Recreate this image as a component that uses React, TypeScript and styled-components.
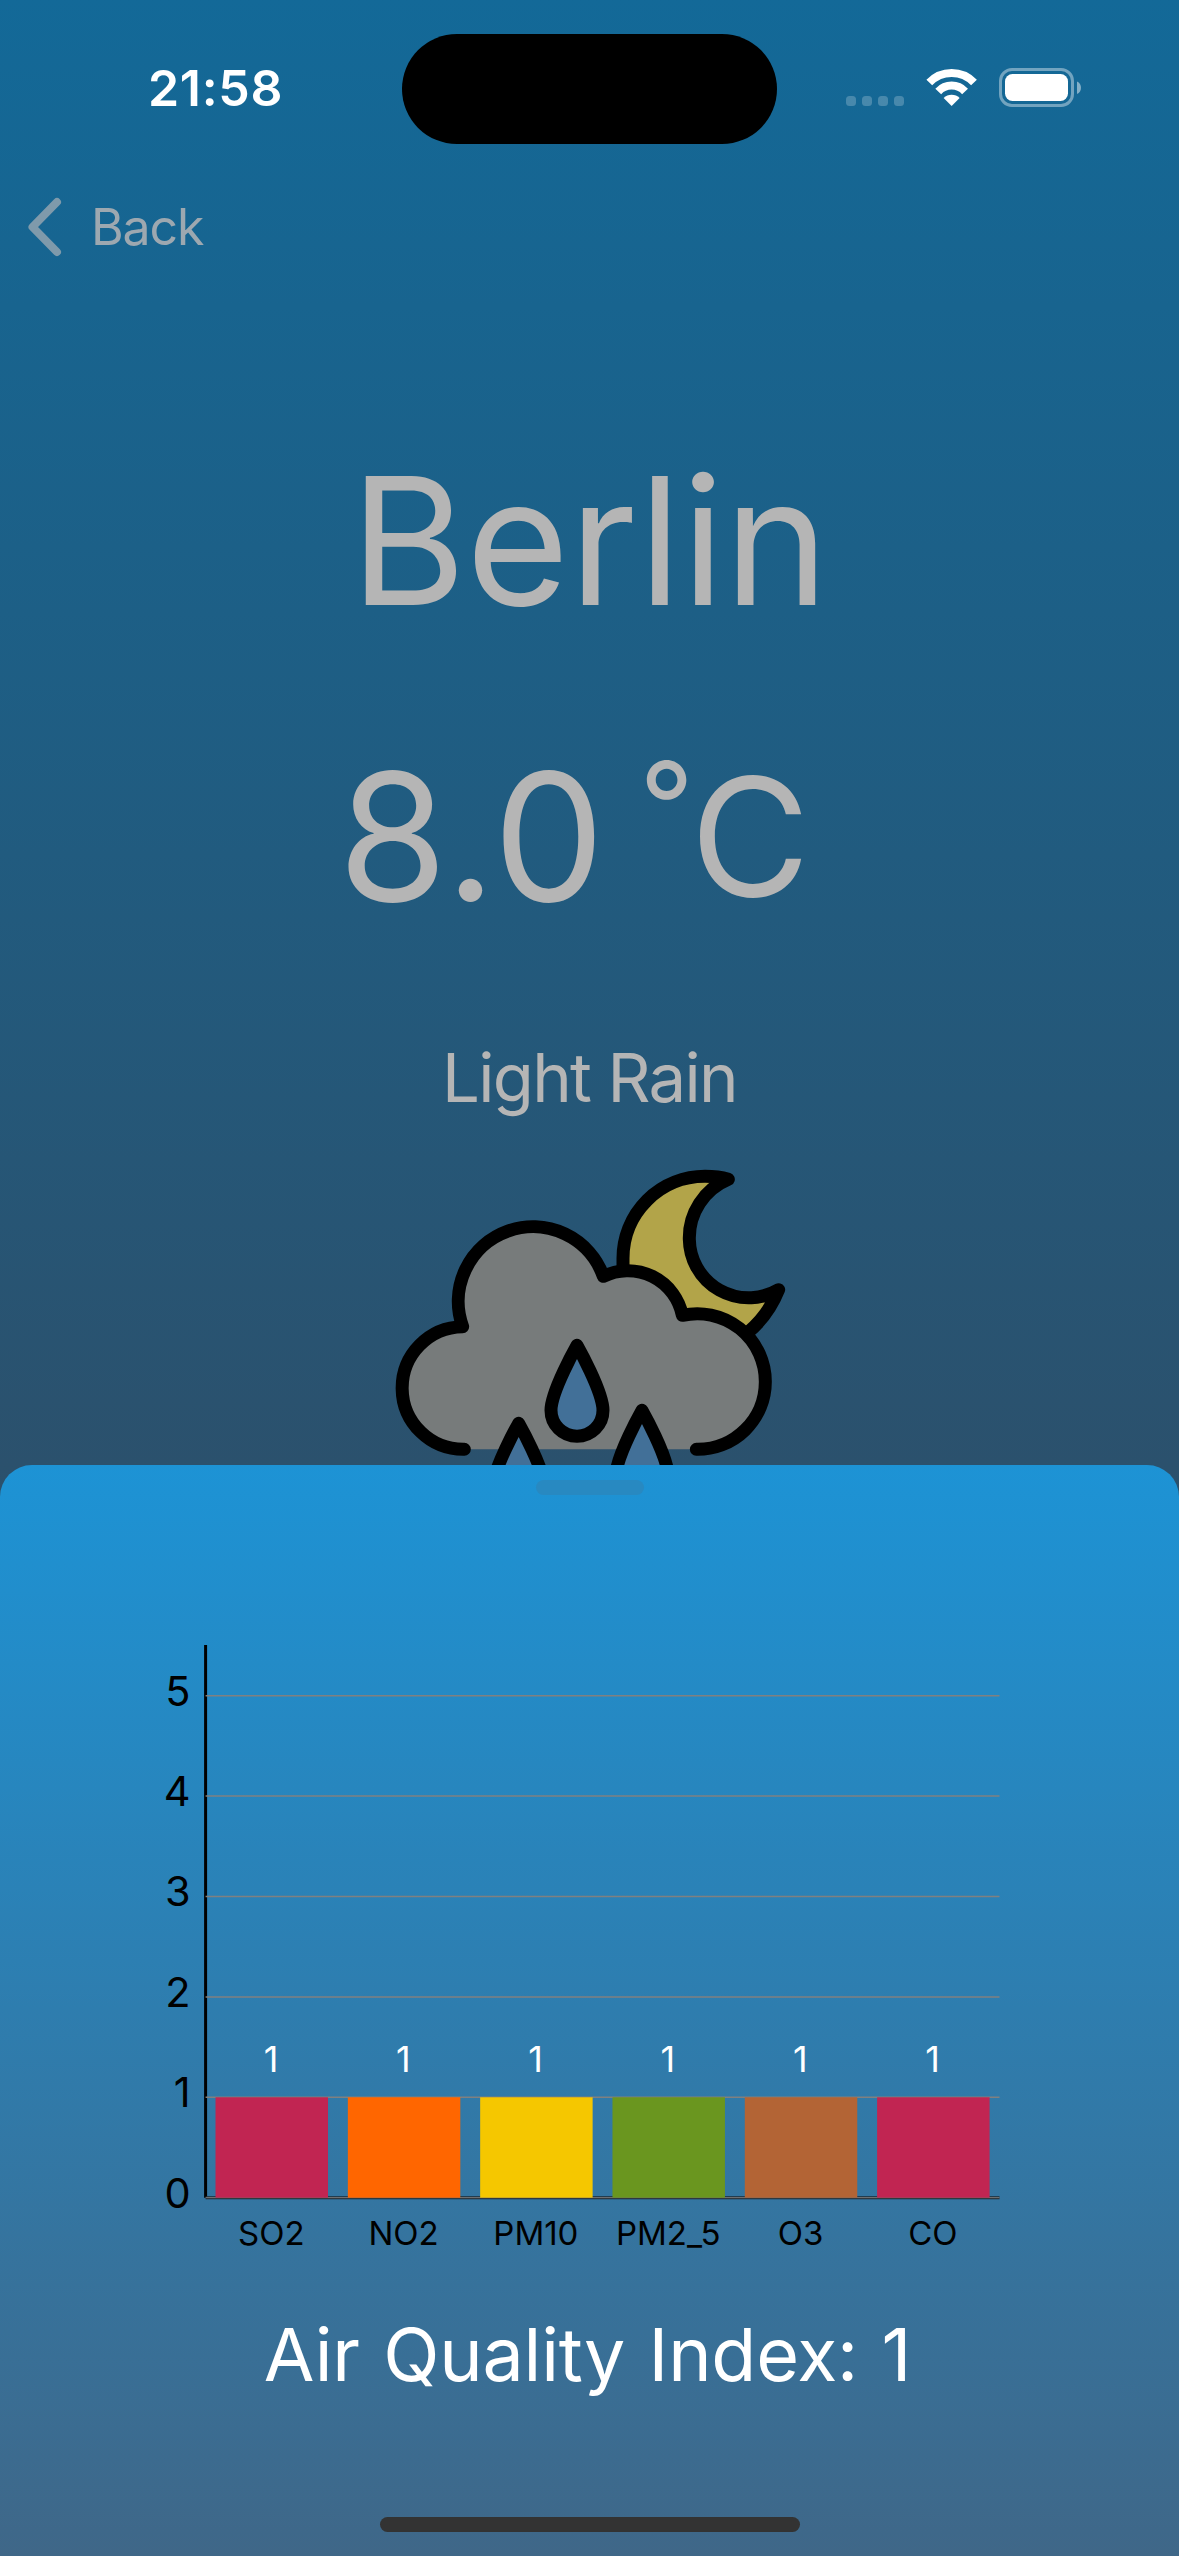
import React from "react";
import styled, { createGlobalStyle } from "styled-components";

const GlobalStyle = createGlobalStyle`
  body { margin: 0; }
  #root { font-family: Inter, "Liberation Sans", sans-serif; }
`;

const Screen = styled.main`
  width: 1179px;
  height: 2556px;
  overflow: hidden;
  display: flex;
  flex-direction: column;
  background: linear-gradient(180deg, #136998 0px, #2b516d 1465px, #2c4e69 1600px);
`;

const StatusBar = styled.header`
  display: grid;
  grid-template-columns: 402px 375px 402px;
  align-items: center;
  height: 110px;
  padding-top: 34px;
`;

const Time = styled.time`
  padding-left: 148px;
  padding-bottom: 2px;
  font-size: 50px;
  line-height: 60px;
  font-weight: 600;
  letter-spacing: 0.7px;
  color: #fff;
`;

const Island = styled.div`
  height: 110px;
  border-radius: 55px;
  background: #000;
`;

const Nav = styled.nav`
  display: flex;
  align-items: center;
  gap: 28px;
  height: 60px;
  margin-top: 53px;
  padding-left: 27px;
`;

const BackLabel = styled.span`
  font-size: 50px;
  line-height: 60px;
  letter-spacing: -1.1px;
  color: #9da8b0;
`;

const City = styled.h1`
  margin: 184px 0 0;
  text-align: center;
  font-size: 177px;
  line-height: 200px;
  font-weight: 400;
  color: #b5b5b5;
`;

const Temperature = styled.div`
  display: flex;
  align-items: center;
  height: 200px;
  margin-top: 96px;
  padding-left: 338px;
  font-size: 177px;
  line-height: 200px;
  font-weight: 400;
  letter-spacing: 1.5px;
  color: #b5b5b5;
`;

const Degree = styled.span`
  margin-left: 33px;
  padding-bottom: 64px;
  font-size: 120px;
`;

const Unit = styled.span`
  margin-left: -5px;
  font-size: 164px;
`;

const Condition = styled.p`
  margin: 101px 0 0;
  text-align: center;
  font-size: 67px;
  line-height: 80px;
  letter-spacing: -1.7px;
  color: #b5b5b5;
`;

const WeatherArt = styled.svg`
  flex: none;
  width: 420px;
  height: 315px;
  margin: 32px 0 0 380px;
`;

const Sheet = styled.section`
  flex: 1;
  display: flex;
  flex-direction: column;
  align-items: center;
  padding-top: 15px;
  border-radius: 32px 32px 0 0;
  background: linear-gradient(180deg, #1d93d5, #3f6788);
`;

const Grabber = styled.div`
  width: 108px;
  height: 15px;
  border-radius: 8px;
  background: #2889c1;
`;

const Chart = styled.svg`
  width: 900px;
  height: 620px;
  margin-top: 145px;
`;

const Summary = styled.h2`
  margin: 45px 0 0;
  padding-right: 4px;
  font-size: 73.5px;
  line-height: 100px;
  font-weight: 400;
  letter-spacing: -0.2px;
  word-spacing: 3px;
  white-space: nowrap;
  color: #fff;
`;

const HomeIndicator = styled.div`
  width: 420px;
  height: 15px;
  margin-top: 112px;
  border-radius: 8px;
  background: #333;
`;

const StatusIcons = () => (
  <svg width="402" height="60" viewBox="777 59 402 60">
    {[846, 862, 878, 894].map((x) => (
      <rect key={x} x={x} y="96" width="10" height="10" rx="3.5" fill="#fff" fillOpacity="0.22" />
    ))}
    <g transform="translate(780 30) scale(0.3333)" fill="none" stroke="#fff" strokeWidth="24">
      <path d="M448 157.500A93 93 0 0 1 582 157.500" />
      <path d="M474.800 184.300A55 55 0 0 1 555.200 184.300" />
      <path d="M515 228L491 204A34 34 0 0 1 539 204Z" fill="#fff" stroke="none" />
    </g>
    <rect x="1000.500" y="69.500" width="72" height="36" rx="11.500" fill="none" stroke="#fff" strokeOpacity="0.4" strokeWidth="3" />
    <rect x="1005" y="74" width="63" height="27" rx="7.500" fill="#fff" />
    <path d="M1077 81.500C1082.300 83.500 1082.300 92 1077 94Z" fill="#fff" fillOpacity="0.48" />
  </svg>
);

const Drop = ({ x, y }: { x: number; y: number }) => (
  <path
    transform={`translate(${x} ${y})`}
    d="M0 0C0 0-78 138-78 195A78 78 0 0 0 78 195C78 138 0 0 0 0Z"
    fill="#427098"
  />
);

const RainyNight = () => (
  <WeatherArt viewBox="0 0 1260 945">
    <path
      fill="#b2a449"
      d="M729 360A246 246 0 0 1 975 79Q1015 79 1045 88A190 190 0 0 0 928 268A178 178 0 0 0 1196 419Q1165 496 1106 545L900 620Z"
    />
    <g fill="none" stroke="#000" strokeWidth="39" strokeLinecap="round" strokeLinejoin="round">
      <path d="M729 355V325A246 246 0 0 1 975 79Q1015 79 1045 88A190 190 0 0 0 928 268A178 178 0 0 0 1196 419Q1165 496 1106 545" />
      <path
        fill="#777b7b"
        d="M253 898A184 184 0 0 1 248 530A224 224 0 0 1 670 379A167 167 0 0 1 907 496A204 204 0 0 1 1156 695A203 203 0 0 1 949 898"
      />
      <Drop x={591} y={586} />
      <Drop x={416} y={820} />
      <Drop x={786} y={781} />
    </g>
  </WeatherArt>
);

const pollutants = [
  { name: "SO2", value: 1, color: "#c12552" },
  { name: "NO2", value: 1, color: "#ff6600" },
  { name: "PM10", value: 1, color: "#f5c700" },
  { name: "PM2_5", value: 1, color: "#6a961f" },
  { name: "O3", value: 1, color: "#b36435" },
  { name: "CO", value: 1, color: "#c12552" },
];

const AxisText = styled.text`
  font-size: 41.5px;
  text-anchor: end;
  font-weight: 400;
`;

const ValueText = styled.text`
  font-size: 36px;
  text-anchor: middle;
  font-weight: 400;
  fill: #fff;
`;

const NameText = styled.text`
  font-size: 33px;
  text-anchor: middle;
  font-weight: 400;
`;

const LEFT = 65.6;
const RIGHT = 859.5;
const BASE = 557.7;
const UNIT = 100.4;
const SLOT = (RIGHT - LEFT) / pollutants.length;
const BAR = SLOT * 0.85;

const AirQualityChart = () => (
  <Chart viewBox="0 0 900 620">
    <path d={`M${LEFT} 5V${BASE}`} stroke="#000" strokeWidth="3" />
    <path d={`M${LEFT} ${BASE}H${RIGHT}`} stroke="#1c2830" strokeWidth="3" />
    {[0, 1, 2, 3, 4, 5].map((n) => (
      <g key={n}>
        <path d={`M${LEFT} ${BASE - n * UNIT}H${RIGHT}`} stroke="#808080" strokeWidth={n ? 1.5 : 1} />
        <AxisText x={LEFT - 15} y={BASE + 9.8 - n * UNIT}>{n}</AxisText>
      </g>
    ))}
    {pollutants.map((p, i) => {
      const mid = LEFT + SLOT * (i + 0.5);
      return (
        <g key={p.name}>
          <rect x={mid - BAR / 2} y={BASE - p.value * UNIT} width={BAR} height={p.value * UNIT} fill={p.color} />
          <ValueText x={mid - 0.8} y={BASE - p.value * UNIT - 25.3}>{p.value}</ValueText>
          <NameText x={mid - 0.5} y={BASE + 47.3}>{p.name}</NameText>
        </g>
      );
    })}
  </Chart>
);

export default function App() {
  return (
    <>
      <GlobalStyle />
      <Screen>
        <StatusBar>
          <Time>21:58</Time>
          <Island />
          <StatusIcons />
        </StatusBar>
        <Nav>
          <svg width="36" height="60" viewBox="27 197 36 60">
            <path d="M57 202L32.500 227L57 252" fill="none" stroke="#7f9aab" strokeWidth="8" strokeLinecap="round" strokeLinejoin="round" />
          </svg>
          <BackLabel>Back</BackLabel>
        </Nav>
        <City>Berlin</City>
        <Temperature>
          8.0<Degree>°</Degree><Unit>C</Unit>
        </Temperature>
        <Condition>Light Rain</Condition>
        <RainyNight />
        <Sheet>
          <Grabber />
          <AirQualityChart />
          <Summary>Air Quality Index: 1</Summary>
          <HomeIndicator />
        </Sheet>
      </Screen>
    </>
  );
}
